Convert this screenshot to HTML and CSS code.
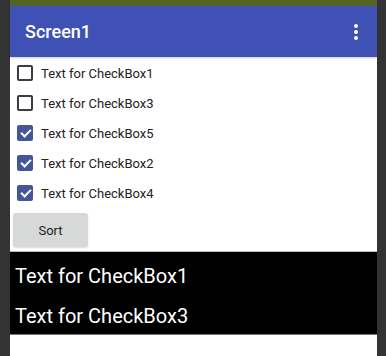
FILE: index.html
```html
<!DOCTYPE html>
<html lang="en">
<head>
    <title>Screen1</title>
    <link rel="stylesheet" href="styles.css">
</head>
<body>
<div class="phone">
    <div class="status"></div>
    <div class="appbar">
        <span class="title">Screen1</span>
        <span class="menu"><i></i><i></i><i></i></span>
    </div>
    <div class="content">
        <label class="check"><span class="box"></span>Text for CheckBox1</label>
        <label class="check"><span class="box"></span>Text for CheckBox3</label>
        <label class="check"><span class="box on"></span>Text for CheckBox5</label>
        <label class="check"><span class="box on"></span>Text for CheckBox2</label>
        <label class="check"><span class="box on"></span>Text for CheckBox4</label>
        <button class="sort">Sort</button>
        <div class="results">
            <div class="line">Text for CheckBox1</div>
            <div class="line">Text for CheckBox3</div>
        </div>
    </div>
</div>
</body>
</html>
```
FILE: styles.css
```css
html, body {
  margin: 0;
  height: 100%;
  background: #333333;
}
body {
  font-family: Roboto, "Liberation Sans", sans-serif;
}
.phone {
  margin: 0 9px 0 10px;
  height: 356px;
  background: white;
}
.status {
  height: 6px;
  background: #536423;
}
.appbar {
  height: 51px;
  background: #3f51b5;
  display: flex;
  align-items: center;
  justify-content: space-between;
  padding: 0 15px;
  box-shadow: 0 1px 2px rgba(0,0,0,0.2);
}
.title {
  color: white;
  font-size: 18px;
  font-weight: 500;
}
.menu {
  display: flex;
  flex-direction: column;
  gap: 2px;
  margin-right: 4px;
}
.menu i {
  width: 4px;
  height: 4px;
  border-radius: 50%;
  background: white;
}
.content {
  padding-top: 1px;
}
.check {
  display: flex;
  align-items: center;
  height: 30px;
  padding-left: 7px;
  font-size: 13px;
  color: #222;
}
.box {
  width: 12px;
  height: 12px;
  border: 2px solid #3a3d45;
  border-radius: 2px;
  margin-right: 8px;
  position: relative;
}
.box.on {
  background: #44559a;
  border-color: #44559a;
}
.box.on::after {
  content: "";
  position: absolute;
  left: 4px;
  top: 0px;
  width: 4px;
  height: 8px;
  border: solid white;
  border-width: 0 2px 2px 0;
  transform: rotate(45deg);
}
.sort {
  display: block;
  margin: 5px 0 4px 3px;
  width: 75px;
  height: 34px;
  border: none;
  border-radius: 3px;
  background: #d7d8d8;
  font-family: Roboto, "Liberation Sans", sans-serif;
  font-size: 13px;
  color: #222;
  box-shadow: 0 1px 2px rgba(0,0,0,0.15);
}
.results {
  background: black;
  border-top: 1px solid #bbb;
  border-bottom: 1px solid #777;
  padding: 4px 0 0 5px;
  height: 78px;
  overflow: hidden;
}
.line {
  color: white;
  font-size: 20px;
  height: 40px;
  line-height: 40px;
}
```
